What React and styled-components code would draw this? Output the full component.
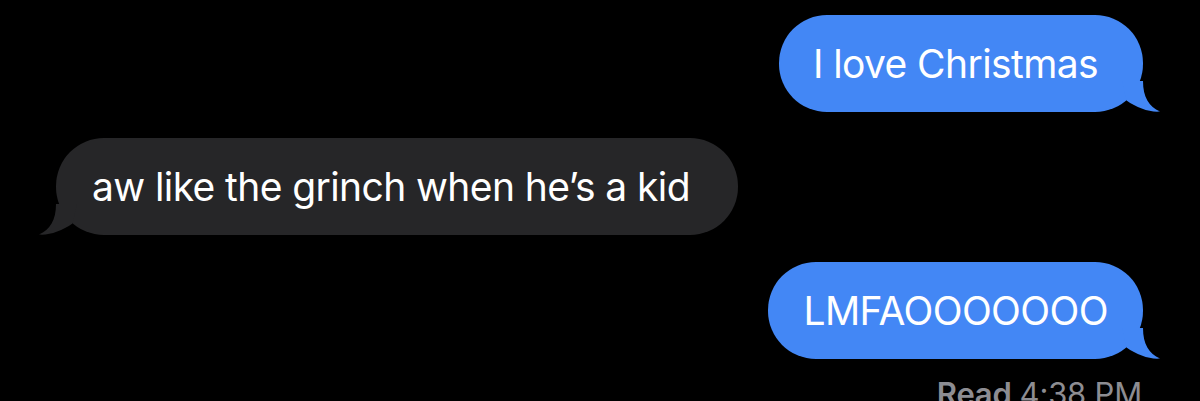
import React from 'react';
import styled, { createGlobalStyle } from 'styled-components';

const GlobalStyle = createGlobalStyle`
  html, body {
    margin: 0;
    padding: 0;
    background: #000;
  }
  body {
    font-family: Inter, "Helvetica Neue", Arial, sans-serif;
    -webkit-font-smoothing: antialiased;
  }
`;

const Thread = styled.div`
  width: 1200px;
  height: 401px;
  overflow: hidden;
  background: #000;
  display: flex;
  flex-direction: column;
  padding-top: 15px;
  box-sizing: border-box;
`;

const Row = styled.div`
  display: flex;
  justify-content: ${(p) => (p.$mine ? 'flex-end' : 'flex-start')};
  padding: ${(p) => (p.$mine ? '0 57px 0 0' : '0 0 0 56px')};
  margin-bottom: ${(p) => p.$gap || 0}px;
`;

const Bubble = styled.div`
  position: relative;
  height: 97px;
  border-radius: 48px;
  display: flex;
  align-items: center;
  box-sizing: border-box;
  padding: 0 ${(p) => p.$padRight}px 0 ${(p) => p.$padLeft}px;
  background: ${(p) => (p.$mine ? '#4387f5' : '#262628')};
  color: #fff;
  font-size: 39px;
  letter-spacing: -0.6px;
  white-space: nowrap;
`;

const Tail = styled.svg`
  position: absolute;
  bottom: 0;
  width: 56px;
  height: 31px;
  ${(p) => (p.$mine ? 'right: -17px;' : 'left: -17px; transform: scaleX(-1);')}
`;

const Receipt = styled.div`
  display: flex;
  justify-content: flex-end;
  padding-right: 58px;
  margin-top: 19px;
  font-size: 31px;
  line-height: 31px;
  color: #8d8d92;
  letter-spacing: -0.2px;
  white-space: nowrap;
`;

const Strong = styled.span`
  font-weight: 600;
  margin-right: 8px;
`;

function BubbleTail({ mine, color }) {
  return (
    <Tail $mine={mine} viewBox="0 0 56 31">
      <path
        d="M18 0 L39 0 C39 16 45 26 56 30.5 C46 31.5 33 27 22.5 19.5 Z"
        fill={color}
      />
    </Tail>
  );
}

function Message({ mine, children, padLeft, padRight, gap }) {
  const color = mine ? '#4387f5' : '#262628';
  return (
    <Row $mine={mine} $gap={gap}>
      <Bubble $mine={mine} $padLeft={padLeft} $padRight={padRight}>
        {children}
        <BubbleTail mine={mine} color={color} />
      </Bubble>
    </Row>
  );
}

export default function App() {
  return (
    <>
      <GlobalStyle />
      <Thread>
        <Message mine padLeft={34} padRight={45} gap={26}>
          I love Christmas
        </Message>
        <Message padLeft={36} padRight={48} gap={27}>
          aw like the grinch when he’s a kid
        </Message>
        <Message mine padLeft={36} padRight={35}>
          LMFAOOOOOOO
        </Message>
        <Receipt>
          <Strong>Read</Strong>4:38 PM
        </Receipt>
      </Thread>
    </>
  );
}
